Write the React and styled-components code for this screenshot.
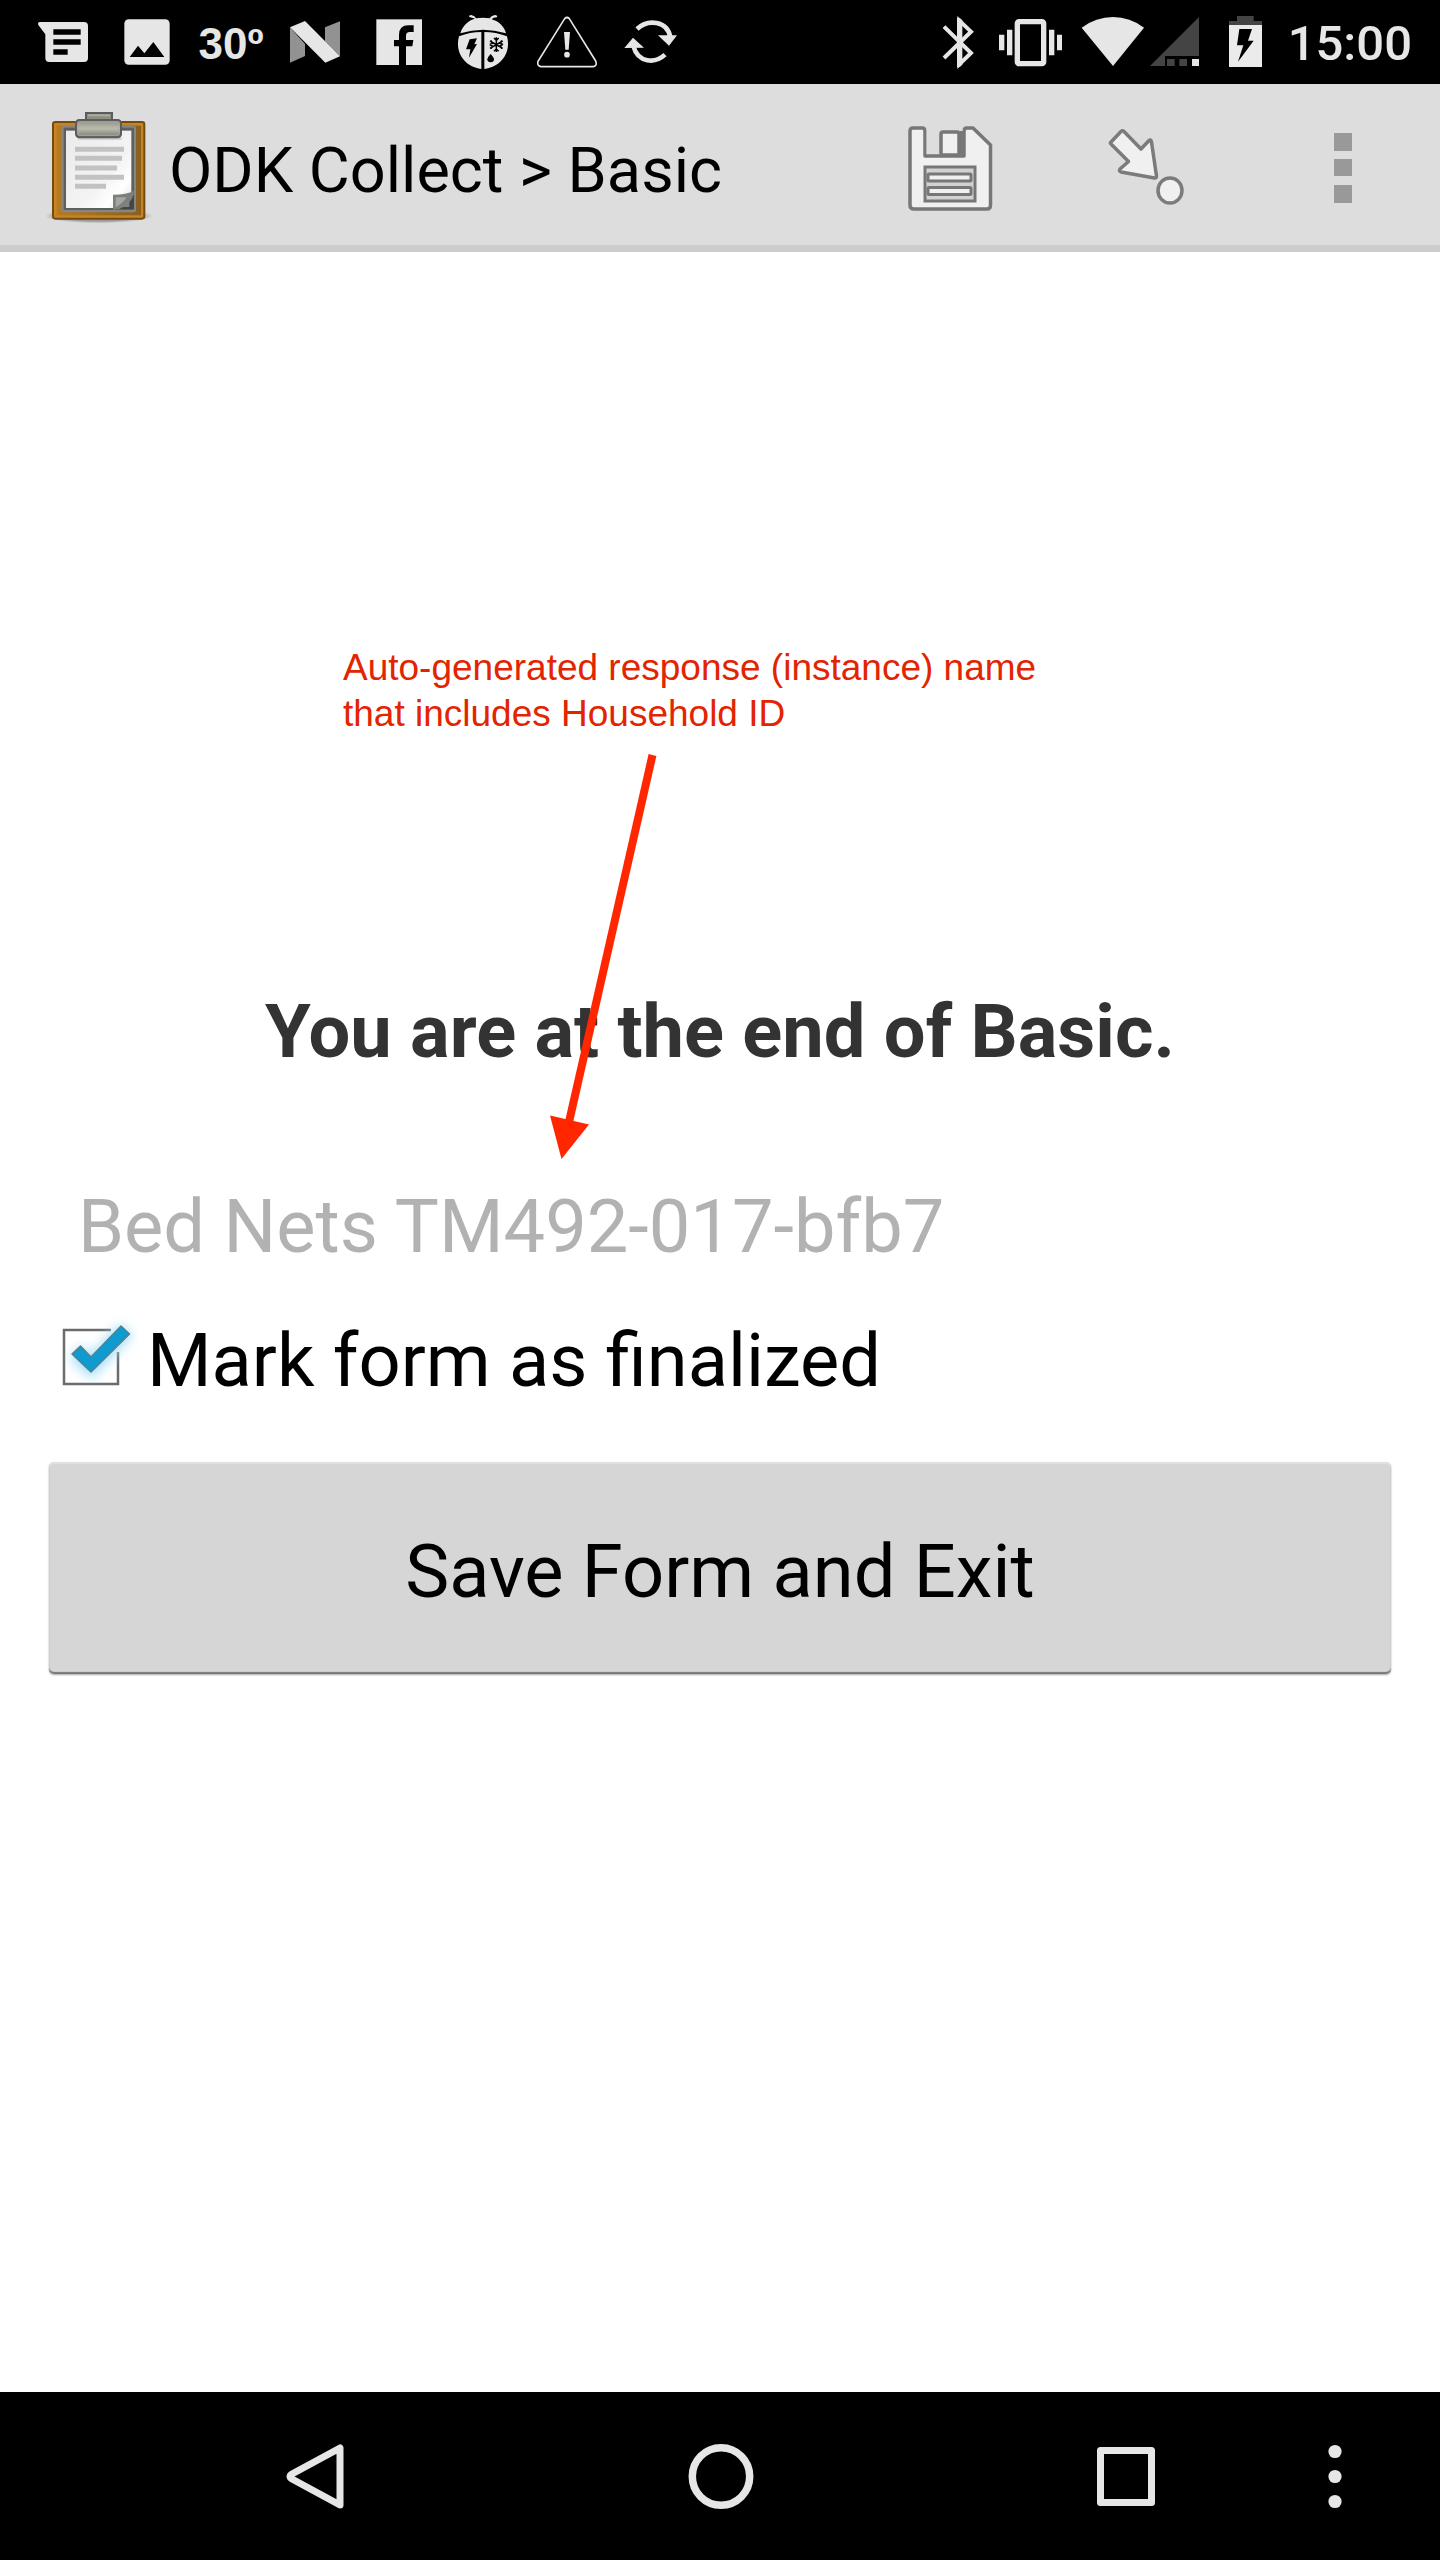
import React, { useState } from "react";
import styled, { createGlobalStyle } from "styled-components";

const GlobalStyle = createGlobalStyle`
  *, *::before, *::after { box-sizing: border-box; }
  body { margin: 0; background: #fff; font-family: Roboto, "Noto Sans", sans-serif; }
  button, input { font: inherit; color: inherit; }
`;

const INK = "#e6e6e6";

const Screen = styled.div`
  display: flex;
  flex-direction: column;
  min-height: 100vh;
`;

const StatusBar = styled.header`
  display: flex;
  justify-content: space-between;
  height: 84px;
  padding: 0 28px 0 21px;
  background: #000;
  color: ${INK};
`;

const StatusGroup = styled.div`
  display: flex;
  align-items: center;
`;

const StatusGlyph = styled.svg`
  display: block;
  width: ${(p) => p.$width || 84}px;
  height: 84px;
  fill: ${INK};
`;

const Temperature = styled.span`
  width: 84px;
  padding-top: 4px;
  font: bold 44px/84px "Liberation Sans Narrow", "Liberation Sans", sans-serif;
  text-align: center;
`;

const Clock = styled.time`
  font-size: 49px;
  font-weight: 500;
  line-height: 84px;
  padding: 4px 0 0 3px;
`;

const Toolbar = styled.div`
  display: flex;
  align-items: center;
  height: 168px;
  padding-left: 47px;
  background: #ddd;
  box-shadow: inset 0 -7px #ccc;
`;

const AppIcon = styled.svg`
  width: 110px;
  height: 120px;
`;

const AppTitle = styled.h1`
  flex: 1;
  margin: 0;
  padding: 6px 0 0 12px;
  font-size: 63px;
  font-weight: 400;
  line-height: 74px;
  white-space: nowrap;
  color: #000;
`;

const ToolButton = styled.button`
  width: 196px;
  height: 168px;
  padding: 0;
  border: 0;
  background: none;
  svg { display: block; width: 196px; height: 168px; }
`;

const Content = styled.main`
  flex: 1;
  padding: 393px 49px 0;
`;

const Note = styled.p`
  position: relative;
  z-index: 1;
  width: 720px;
  margin: 0 0 251px 294px;
  font: 37px/46px "Liberation Sans", Arial, sans-serif;
  color: #e32400;
`;

const Arrow = styled.svg`
  position: absolute;
  top: 100%;
  left: 200px;
  width: 120px;
  height: 430px;
  pointer-events: none;
`;

const EndMessage = styled.h2`
  margin: 0 0 107px;
  font-size: 74px;
  font-weight: 700;
  line-height: 88px;
  text-align: center;
  color: #333;
`;

const NameField = styled.input`
  display: block;
  width: 100%;
  height: 88px;
  margin: 0 0 46px;
  padding: 0 29px;
  border: 0;
  background: none;
  font-size: 74px;
  line-height: 88px;
  &:disabled { color: #b2b2b2; }
`;

const CheckRow = styled.label`
  display: flex;
  align-items: center;
  width: fit-content;
  margin-bottom: 57px;
  font-size: 74px;
  line-height: 88px;
  color: #000;
`;

const CheckSlot = styled.span`
  display: grid;
  width: 98px;
  height: 88px;
  > * { grid-area: 1 / 1; }
  svg { width: 98px; height: 88px; pointer-events: none; overflow: visible; }
`;

const CheckInput = styled.input`
  appearance: none;
  width: 98px;
  height: 88px;
  margin: 0;
`;

const SaveButton = styled.button`
  display: block;
  width: 100%;
  height: 212px;
  padding: 8px 0 0;
  border: 0;
  border-radius: 5px;
  background: #d6d6d6;
  box-shadow: inset 0 2px 1px #e2e2e2, inset 0 -2px 1px #777, 0 1px 2px rgba(0, 0, 0, 0.35);
  font-size: 74px;
  line-height: 88px;
  color: #000;
`;

const NavBar = styled.nav`
  display: grid;
  grid-template-columns: 114px 1fr 1fr 1fr 112px;
  height: 168px;
  background: #000;
`;

const NavButton = styled.button`
  grid-column: ${(p) => p.$column};
  justify-self: ${(p) => (p.$end ? "end" : "center")};
  width: 84px;
  height: 168px;
  margin-right: ${(p) => (p.$end ? 63 : 0)}px;
  padding: 0;
  border: 0;
  background: none;
  svg { display: block; width: 84px; height: 168px; }
`;

function NotificationIcons() {
  return (
    <StatusGroup>
      <StatusGlyph viewBox="63 0 252 252" aria-label="Message">
        <path d="M120 66H252Q264 66 264 78V174Q264 186 252 186H148Q136 186 136 174V103L115 75Q112 66 120 66Z" />
        <path d="M160 96H242M160 126H242M160 156H203" stroke="#000" strokeWidth="17" />
      </StatusGlyph>
      <StatusGlyph viewBox="315 0 252 252" aria-label="Picture">
        <rect x="373" y="58" width="136" height="136" rx="13" />
        <path d="M389 171L414 137L433 160L460 126L493 171Z" fill="#000" />
      </StatusGlyph>
      <Temperature>30º</Temperature>
      <StatusGlyph viewBox="819 0 252 252" aria-label="Android N">
        <path d="M870 82L915 132V168L870 188ZM975 82L1020 64V169L975 124Z" fill="#929292" />
        <path d="M870 82L915 63L1020 169L976 188Z" />
      </StatusGlyph>
      <StatusGlyph viewBox="-9 0 252 252" aria-label="Facebook">
        <rect x="49" y="58" width="137" height="137" />
        <path d="M117 195V139H102V120H117V105Q117 76 145 76H161V96H149Q138 96 138 107V120H160L157 139H138V195Z" fill="#000" />
      </StatusGlyph>
      <StatusGlyph viewBox="243 0 252 252" aria-label="Weather alert">
        <path d="M301 100C308 76 326 61 345 56L339 54L328 51Q325 45 334 45Q345 47 348 55Q369 51 389 55Q393 47 404 45Q414 46 411 52Q399 52 395 58C417 64 433 80 438 100Q369 78 301 100Z" />
        <path d="M297 109Q330 96 364 96V207C312 200 284 155 297 109ZM373 96Q407 96 441 109C454 155 426 200 373 207Z" />
        <path d="M329 118L351 115L343 133L351 132L327 173L331 148H318Z" fill="#000" />
        <path d="M409 112V156M390 123L428 145M428 123L390 145M402 114L409 121L416 114M402 154L409 147L416 154M389 133L397 130L393 122M429 133L421 137L425 146M429 133L421 130L425 122M389 134L397 138L393 146" stroke="#000" strokeWidth="4.500" fill="none" />
        <path d="M392 162Q402 173 402 178A10 9 0 0 1 382 178Q383 171 392 162Z" fill="#000" />
      </StatusGlyph>
      <StatusGlyph viewBox="495 0 252 252" aria-label="Warning">
        <path d="M614 56Q621 49 628 56L707 183Q713 197 700 200H543Q530 197 534 184Z" fill="none" stroke={INK} strokeWidth="5" />
        <path d="M612 96H630L626 149H616Z" />
        <circle cx="621" cy="164" r="8.500" />
      </StatusGlyph>
      <StatusGlyph viewBox="747 0 252 252" aria-label="Sync">
        <path d="M831 87C864 56 922 62 931 112M915 164C886 191 834 190 820 138" fill="none" stroke={INK} strokeWidth="14" />
        <path d="M894 106H951L927 137ZM793 144L819 113L852 143Z" />
      </StatusGlyph>
    </StatusGroup>
  );
}

function SystemIcons() {
  return (
    <StatusGroup>
      <StatusGlyph $width={73} viewBox="3 0 219 252" aria-label="Bluetooth">
        <path d="M72 80L153 159L118 193V62L153 95L72 174" fill="none" stroke={INK} strokeWidth="12" />
        <path d="M111 54H119L127 61V194L119 201H111Z" />
      </StatusGlyph>
      <StatusGlyph $width={73} viewBox="222 0 219 252" aria-label="Vibrate">
        <rect x="292" y="65" width="79" height="126" rx="5" fill="none" stroke={INK} strokeWidth="16" />
        <path d="M237 104H253V151H237ZM261 89H277V166H261ZM387 89H403V166H387ZM411 104H426V151H411Z" />
      </StatusGlyph>
      <StatusGlyph $width={80} viewBox="441 0 240 252" aria-label="Wi-Fi">
        <path d="M485 83Q528 51 579 51T672 83L579 198Z" />
      </StatusGlyph>
      <StatusGlyph $width={60} viewBox="681 0 180 252" aria-label="Signal">
        <path d="M837 51V168H735V198H690Z" fill="#444" />
        <path d="M741 177H764V198H741ZM778 177H801V198H778Z" fill="#444" />
        <path d="M816 177H837V198H816Z" />
      </StatusGlyph>
      <StatusGlyph $width={78} viewBox="861 0 234 252" aria-label="Battery charging">
        <path d="M927 75V63H951V48H1001V63H1026V75Z" fill="#444" />
        <rect x="927" y="75" width="99" height="126" fill="#ebebeb" />
        <path d="M958 87H996L984 122H1001L954 185L970 136H951Z" fill="#000" />
      </StatusGlyph>
      <Clock>15:00</Clock>
    </StatusGroup>
  );
}

function Clipboard() {
  return (
    <AppIcon viewBox="51 54 330 360" aria-hidden="true">
      <defs>
        <linearGradient id="board" x1="0" x2="1">
          <stop offset="0" stopColor="#b87a22" />
          <stop offset="1" stopColor="#8a5f1e" />
        </linearGradient>
        <linearGradient id="clip" x1="0" x2="0" y1="0" y2="1">
          <stop offset="0" stopColor="#8c8d80" />
          <stop offset="0.5" stopColor="#bbbcae" />
          <stop offset="1" stopColor="#77786b" />
        </linearGradient>
        <linearGradient id="paper" x1="0" x2="1" y1="0" y2="1">
          <stop offset="0" stopColor="#ebebeb" />
          <stop offset="0.6" stopColor="#f3f3f3" />
          <stop offset="0.8" stopColor="#fff" />
          <stop offset="1" stopColor="#ddd" />
        </linearGradient>
        <radialGradient id="shade">
          <stop offset="0.7" stopColor="#000" stopOpacity="0.3" />
          <stop offset="1" stopColor="#000" stopOpacity="0" />
        </radialGradient>
      </defs>
      <ellipse cx="206" cy="378" rx="163" ry="22" fill="url(#shade)" />
      <rect x="69" y="96" width="274" height="290" rx="7" fill="#c68424" stroke="#754c10" strokeWidth="6" />
      <rect x="80" y="107" width="253" height="269" fill="url(#board)" />
      <rect x="94" y="108" width="224" height="259" rx="6" fill="#858780" />
      <rect x="101" y="113" width="211" height="247" fill="#5e5f60" />
      <rect x="108" y="122" width="196" height="232" fill="url(#paper)" />
      <path d="M140 142H275V150H145Z" fill="#d2d2d2" />
      <path d="M135 178H282M135 205H276M135 234H261M135 262H282M135 289H228" stroke="#c2c2c2" strokeWidth="15" />
      <path d="M304 310L312 318V357H265Z" fill="#454649" />
      <path d="M249 314Q290 314 312 303Q312 335 267 358L249 359Z" fill="#7d807a" />
      <path d="M257 322H290Q278 341 257 352Z" fill="#a4a6a2" />
      <path d="M298 329V351H274Z" fill="#828380" />
      <path d="M168 90V69H246V90" fill="#8e8f83" stroke="#5b5c5b" strokeWidth="6" />
      <path d="M174 76H240" stroke="#aeb0a6" strokeWidth="5" />
      <rect x="138" y="90" width="135" height="52" rx="10" fill="url(#clip)" stroke="#5b5c5b" strokeWidth="6" />
      <rect x="144" y="96" width="123" height="40" rx="5" fill="none" stroke="#a6a79d" strokeWidth="3" />
    </AppIcon>
  );
}

function SaveIcon() {
  return (
    <svg viewBox="0 0 196 168" fill="#f0f0f0" stroke="#777" strokeWidth="3.500" strokeLinejoin="round" aria-hidden="true">
      <path d="M61 44H70Q73 44 73 47V72H112V47Q112 44 115 44H121L138.500 61V121Q138.500 125 135 125H62Q58 125 58 121V47Q58 44 61 44Z" />
      <path d="M74.500 44H110.500V70H74.500Z" fill="#ddd" stroke="none" />
      <path d="M107 48H112V71H107Z" fill="#777" strokeWidth="2" />
      <rect x="89" y="48" width="18" height="23" rx="2" />
      <g strokeWidth="3">
        <rect x="73" y="83" width="50" height="34" fill="#d2d2d2" strokeLinejoin="miter" />
        <rect x="76" y="90" width="43" height="7" rx="1" />
        <rect x="76" y="103.500" width="43" height="7" rx="1" />
      </g>
    </svg>
  );
}

function JumpIcon() {
  return (
    <svg viewBox="0 0 196 168" fill="#f0f0f0" stroke="#7b7b7b" strokeWidth="3.500" strokeLinejoin="round" aria-hidden="true">
      <path d="M73 47.500Q74.500 46 76 47.500L93 65L101 56.500Q103 55 103.500 58L108.500 92Q108.500 94 106.500 94L73 88Q70.500 87 72 85L80.500 77.500L63 60Q62 59 63 58Z" />
      <ellipse cx="122" cy="106.500" rx="12" ry="12.500" />
    </svg>
  );
}

export default function App() {
  const [finalized, setFinalized] = useState(true);

  return (
    <Screen>
      <GlobalStyle />
      <StatusBar>
        <NotificationIcons />
        <SystemIcons />
      </StatusBar>

      <Toolbar>
        <Clipboard />
        <AppTitle>ODK Collect &gt; Basic</AppTitle>
        <ToolButton type="button" aria-label="Save">
          <SaveIcon />
        </ToolButton>
        <ToolButton type="button" aria-label="Go to prompt">
          <JumpIcon />
        </ToolButton>
        <ToolButton type="button" aria-label="More options">
          <svg viewBox="0 0 196 168" fill="#999" aria-hidden="true">
            <path d="M90 49H108V67H90ZM90 75H108V92H90ZM90 101H108V119H90Z" />
          </svg>
        </ToolButton>
      </Toolbar>

      <Content>
        <Note>
          Auto-generated response (instance) name
          <br />
          that includes Household ID
          <Arrow viewBox="543 737 120 430" aria-hidden="true">
            <path d="M652.500 755L569 1122" stroke="#ff2600" strokeWidth="8" />
            <path d="M550 1115.500L589 1124.500L561.500 1159Z" fill="#ff2600" />
          </Arrow>
        </Note>
        <EndMessage>You are at the end of Basic.</EndMessage>
        <NameField type="text" aria-label="Form name" defaultValue="Bed Nets TM492-017-bfb7" disabled />
        <CheckRow>
          <CheckSlot>
            <CheckInput type="checkbox" checked={finalized} onChange={(e) => setFinalized(e.target.checked)} />
            <svg viewBox="49 1317 98 88" aria-hidden="true">
              <defs>
                <filter id="glow" x="-50%" y="-50%" width="200%" height="200%">
                  <feGaussianBlur stdDeviation="6" />
                </filter>
              </defs>
              <path
                d={finalized ? "M111 1330H64V1384H118V1352" : "M64 1330H118V1384H64Z"}
                fill="none"
                stroke="#6b6b6b"
                strokeWidth="2.500"
              />
              {finalized && (
                <>
                  <path d="M76 1352L91 1367L126 1330" fill="none" stroke="#9fdcf5" strokeWidth="16" filter="url(#glow)" />
                  <path
                    d="M72 1354L80.500 1346L91 1357L121 1326L129.500 1334L91 1372Z"
                    fill="#0d9bd0"
                    stroke="#557f92"
                    strokeWidth="1.500"
                    strokeLinejoin="round"
                  />
                </>
              )}
            </svg>
          </CheckSlot>
          Mark form as finalized
        </CheckRow>
        <SaveButton type="button">Save Form and Exit</SaveButton>
      </Content>

      <NavBar>
        <NavButton type="button" aria-label="Back" $column={2}>
          <svg viewBox="0 0 84 168" fill="none" stroke={INK} strokeWidth="7" strokeLinejoin="round" aria-hidden="true">
            <path d="M66 56V113L18 87Q14 84.500 18 82Z" />
          </svg>
        </NavButton>
        <NavButton type="button" aria-label="Home" $column={3}>
          <svg viewBox="0 0 84 168" fill="none" stroke={INK} strokeWidth="7.500" aria-hidden="true">
            <circle cx="42" cy="84.500" r="28.700" />
          </svg>
        </NavButton>
        <NavButton type="button" aria-label="Recent apps" $column={4}>
          <svg viewBox="0 0 84 168" fill="none" stroke={INK} strokeWidth="7" strokeLinejoin="round" aria-hidden="true">
            <rect x="16.500" y="58.500" width="51" height="52" />
          </svg>
        </NavButton>
        <NavButton type="button" aria-label="Menu" $column={5} $end>
          <svg viewBox="0 0 84 168" fill={INK} aria-hidden="true">
            <circle cx="42" cy="59.500" r="6.600" />
            <circle cx="42" cy="84.500" r="6.600" />
            <circle cx="42" cy="109.500" r="6.600" />
          </svg>
        </NavButton>
      </NavBar>
    </Screen>
  );
}
